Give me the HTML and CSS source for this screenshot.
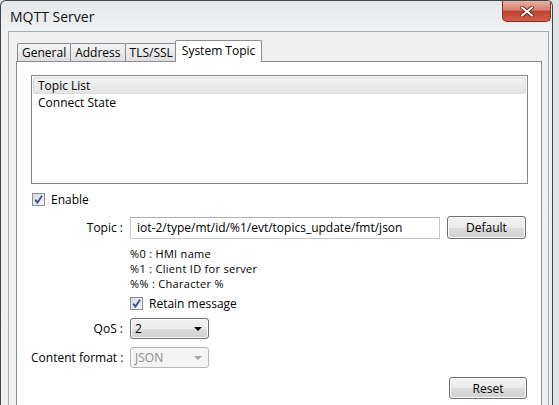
FILE: index.html
```html
<!DOCTYPE html>
<html lang="en">
  <head>
    <meta charset="UTF-8" />
    <title>MQTT Server</title>
    <link rel="stylesheet" href="styles.css">
  </head>
  <body>
    <div class="window">
      <div class="titlebar">
        <span class="title">MQTT Server</span>
        <button class="close" title="Close">
          <svg width="14" height="11" viewBox="0 0 14 11">
            <path d="M2 1.5 L12 9.5 M12 1.5 L2 9.5" stroke="#5a1d14" stroke-width="3.6" stroke-linecap="round" />
            <path d="M2 1.5 L12 9.5 M12 1.5 L2 9.5" stroke="#ffffff" stroke-width="2.2" stroke-linecap="round" />
          </svg>
        </button>
      </div>

      <div class="client">
        <div class="tabs">
          <div class="tab">General</div>
          <div class="tab">Address</div>
          <div class="tab">TLS/SSL</div>
          <div class="tab active">System Topic</div>
        </div>

        <div class="panel">
          <ul class="listbox">
            <li class="selected">Topic List</li>
            <li>Connect State</li>
          </ul>

          <label class="check enable">
            <span class="box">
              <svg width="11" height="11" viewBox="0 0 11 11">
                <path d="M2.2 5.6 L4.4 8.6 L9 1.8" fill="none" stroke="#3b4f91" stroke-width="1.8" />
              </svg>
            </span>
            Enable
          </label>

          <div class="row topic-row">
            <span class="label">Topic :</span>
            <div class="input">iot-2/type/mt/id/%1/evt/topics_update/fmt/json</div>
            <button class="btn">Default</button>
          </div>

          <div class="help">
            <div>%0 : HMI name</div>
            <div>%1 : Client ID for server</div>
            <div>%% : Character %</div>
          </div>

          <label class="check retain">
            <span class="box">
              <svg width="11" height="11" viewBox="0 0 11 11">
                <path d="M2.2 5.6 L4.4 8.6 L9 1.8" fill="none" stroke="#3b4f91" stroke-width="1.8" />
              </svg>
            </span>
            Retain message
          </label>

          <div class="row qos-row">
            <span class="label">QoS :</span>
            <div class="select">
              <span>2</span>
              <span class="arrow"></span>
            </div>
          </div>

          <div class="row format-row">
            <span class="label">Content format :</span>
            <div class="select disabled">
              <span>JSON</span>
              <span class="arrow"></span>
            </div>
          </div>

          <div class="footer">
            <button class="btn">Reset</button>
          </div>
        </div>
      </div>
    </div>
  </body>
</html>
```

FILE: styles.css
```css
body {
  margin: 0;
  background: #dfe1e3;
  font-family: "Open Sans", "Noto Sans", sans-serif;
  font-size: 12px;
  color: #000;
}

.window {
  width: 553px;
  height: 405px;
  box-sizing: border-box;
  border: 1px solid #404448;
  border-bottom: none;
  border-radius: 6px 6px 0 0;
  background: linear-gradient(#e4e7ea, #f1f2f4 30px, #eceef0);
  display: flex;
  flex-direction: column;
  overflow: hidden;
}

.titlebar {
  height: 30px;
  display: flex;
  justify-content: space-between;
  align-items: flex-start;
  padding-left: 9px;
}

.title {
  margin-top: 7px;
  font-size: 14px;
  line-height: 18px;
  color: #111;
}

.close {
  width: 49px;
  height: 21px;
  margin-right: 1px;
  padding: 0;
  border: 1px solid #7a3328;
  border-top: none;
  border-radius: 0 0 5px 5px;
  background: linear-gradient(#eab0a4, #d9806f 45%, #c2432f 52%, #d35f47);
  display: flex;
  align-items: center;
  justify-content: center;
}

/* client area */
.client {
  flex: 1;
  margin: 0 3px 0 7px;
  padding: 8px 6px 0 7px;
  background: #f0f0f0;
  border: 1px solid #a7abb0;
  border-bottom: none;
  display: flex;
  flex-direction: column;
}

.tabs {
  display: flex;
  align-items: flex-end;
  height: 21px;
  padding-left: 1px;
}

.tab {
  height: 18px;
  box-sizing: border-box;
  padding: 0 4px;
  line-height: 17px;
  border: 1px solid #898c95;
  border-bottom: none;
  border-radius: 2px 2px 0 0;
  background: linear-gradient(#f3f3f3, #ebebeb 50%, #dedede);
  margin-right: -1px;
}

.tab.active {
  position: relative;
  height: 22px;
  margin: 0 0 -1px -2px;
  padding: 0 6px;
  line-height: 19px;
  background: #fff;
  z-index: 1;
}

.panel {
  flex: 1;
  background: #fff;
  border: 1px solid #898c95;
  border-bottom: none;
  padding: 13px 13px 0 14px;
  display: flex;
  flex-direction: column;
}

.listbox {
  list-style: none;
  margin: 0;
  height: 109px;
  box-sizing: border-box;
  padding: 1px;
  border: 1px solid #828790;
}

.listbox li {
  height: 17px;
  line-height: 16px;
  padding-left: 4px;
  border: 1px solid transparent;
  box-sizing: border-box;
}

.listbox li.selected {
  background: linear-gradient(#f2f2f2, #e4e4e4);
  border-color: #dadada;
  border-radius: 2px;
}

.check {
  display: flex;
  align-items: center;
  gap: 6px;
  height: 13px;
}

.box {
  width: 13px;
  height: 13px;
  box-sizing: border-box;
  border: 1px solid #8e8f8f;
  background: linear-gradient(135deg, #d6d9de, #f6f7f8);
  display: flex;
  align-items: center;
  justify-content: center;
}

.enable {
  margin: 9px 0 0 1px;
}

.row {
  display: flex;
  align-items: center;
}

.label {
  width: 92px;
  margin-right: 7px;
  text-align: right;
  white-space: nowrap;
}

.topic-row {
  margin-top: 10px;
}

.input {
  width: 310px;
  height: 22px;
  box-sizing: border-box;
  border: 1px solid #c5c8cc;
  border-top-color: #abadb3;
  padding-left: 6px;
  line-height: 20px;
  white-space: nowrap;
  overflow: hidden;
}

.btn {
  width: 79px;
  height: 23px;
  padding: 0;
  font: inherit;
  color: #000;
  border: 1px solid #707070;
  border-radius: 3px;
  background: linear-gradient(#f2f2f2, #ebebeb 50%, #dddddd 51%, #cfcfcf);
  box-shadow: inset 0 0 0 1px #fcfcfc;
}

.topic-row .btn {
  margin-left: 7px;
}

.help {
  margin: 7px 0 0 99px;
  font-size: 11px;
  letter-spacing: 0.3px;
  line-height: 15px;
}

.retain {
  margin: 6px 0 0 99px;
}

.qos-row {
  margin-top: 8px;
}

.format-row {
  margin-top: 8px;
}

.select {
  width: 79px;
  height: 21px;
  box-sizing: border-box;
  border: 1px solid #707070;
  border-radius: 3px;
  background: linear-gradient(#f2f2f2, #ebebeb 50%, #dddddd 51%, #cfcfcf);
  box-shadow: inset 0 0 0 1px #fcfcfc;
  padding: 0 6px 0 4px;
  display: flex;
  align-items: center;
  justify-content: space-between;
}

.arrow {
  width: 0;
  height: 0;
  border-left: 4px solid transparent;
  border-right: 4px solid transparent;
  border-top: 4px solid #000;
}

.select.disabled {
  border-color: #b5b8bc;
  background: #f4f4f4;
  box-shadow: none;
  color: #8d8d8d;
}

.select.disabled .arrow {
  border-top-color: #a6a6a6;
}

.footer {
  display: flex;
  justify-content: flex-end;
  margin: 9px 1px 0 0;
}

.footer .btn {
  height: 22px;
  width: 78px;
}
```
